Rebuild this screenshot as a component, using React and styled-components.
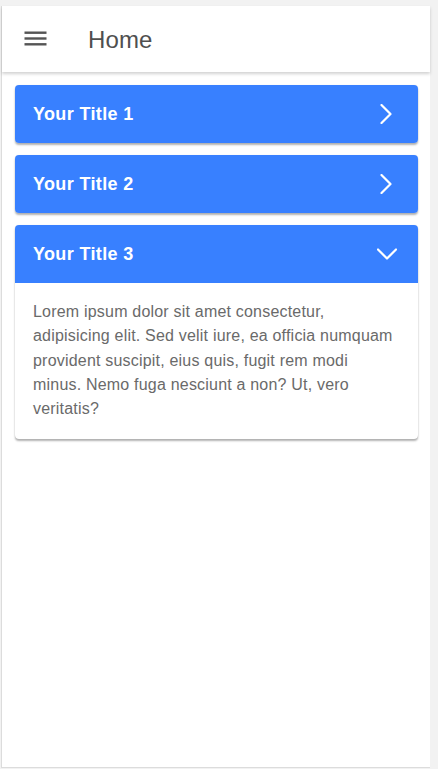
import React from "react";
import styled, { createGlobalStyle } from "styled-components";

const Global = createGlobalStyle`
  html, body { margin: 0; padding: 0; background: #f2f2f2; }
  body { font-family: "Liberation Sans", Arial, sans-serif; }
  * { box-sizing: border-box; }
`;

const Frame = styled.div`
  margin: 6px 0 0 1px;
  width: 429px;
  height: 762px;
  background: #fff;
  border-left: 1px solid #dcdcdc;
  border-bottom: 1px solid #dcdcdc;
  display: flex;
  flex-direction: column;
`;

const Toolbar = styled.header`
  height: 66px;
  display: flex;
  align-items: center;
  padding-left: 21px;
  background: #fff;
  box-shadow: 0 2px 3px rgba(0, 0, 0, 0.18);
  position: relative;
  z-index: 1;
`;

const MenuButton = styled.button`
  border: 0;
  background: none;
  padding: 0;
  width: 24px;
  height: 24px;
  display: flex;
  align-items: center;
  justify-content: center;
  margin-top: -2px;
`;

const Title = styled.h1`
  margin: 0 0 0 41px;
  font-size: 24px;
  font-weight: 400;
  color: #4f4f4f;
  padding-top: 2px;
  letter-spacing: 0.1px;
`;

const List = styled.div`
  display: flex;
  flex-direction: column;
  gap: 12px;
  padding: 13px 12px 0 13px;
`;

const Card = styled.section`
  border-radius: 4px;
  overflow: hidden;
  background: #fff;
  box-shadow: 0 2px 2px rgba(0, 0, 0, 0.3), 0 0 1px rgba(0, 0, 0, 0.15);
`;

const CardHeader = styled.div`
  height: 58px;
  background: #3880ff;
  display: flex;
  align-items: center;
  justify-content: space-between;
  padding: 0 22px 0 18px;
`;

const CardTitle = styled.h2`
  margin: 0;
  font-size: 18px;
  font-weight: 700;
  color: #fff;
  letter-spacing: 0.35px;
`;

const CardBody = styled.div`
  padding: 17px 18px 18px 18px;
  font-size: 16px;
  line-height: 24.3px;
  letter-spacing: 0.2px;
  color: #6a6a6a;
`;

const Chevron = ({ open }) =>
  open ? (
    <svg width="20" height="12" viewBox="0 0 20 12" style={{ marginRight: -1 }}>
      <polyline points="1,1.5 10,10.5 19,1.5" fill="none" stroke="#fff" strokeWidth="2.2" strokeLinecap="round" strokeLinejoin="round" />
    </svg>
  ) : (
    <svg width="12" height="20" viewBox="0 0 12 20" style={{ marginRight: 4 }}>
      <polyline points="1.5,1 10.5,10 1.5,19" fill="none" stroke="#fff" strokeWidth="2.2" strokeLinecap="round" strokeLinejoin="round" />
    </svg>
  );

const items = [
  { title: "Your Title 1", open: false },
  { title: "Your Title 2", open: false },
  {
    title: "Your Title 3",
    open: true,
    body:
      "Lorem ipsum dolor sit amet consectetur, adipisicing elit. Sed velit iure, ea officia numquam provident suscipit, eius quis, fugit rem modi minus. Nemo fuga nesciunt a non? Ut, vero veritatis?",
  },
];

export default function App() {
  return (
    <>
      <Global />
      <Frame>
        <Toolbar>
          <MenuButton aria-label="menu">
            <svg width="23" height="15" viewBox="0 0 23 15">
              <rect x="0.5" y="0.5" width="22" height="2.4" fill="#555" />
              <rect x="0.5" y="6.3" width="22" height="2.4" fill="#555" />
              <rect x="0.5" y="12.1" width="22" height="2.4" fill="#555" />
            </svg>
          </MenuButton>
          <Title>Home</Title>
        </Toolbar>
        <List>
          {items.map((it) => (
            <Card key={it.title}>
              <CardHeader>
                <CardTitle>{it.title}</CardTitle>
                <Chevron open={it.open} />
              </CardHeader>
              {it.open && <CardBody>{it.body}</CardBody>}
            </Card>
          ))}
        </List>
      </Frame>
    </>
  );
}
